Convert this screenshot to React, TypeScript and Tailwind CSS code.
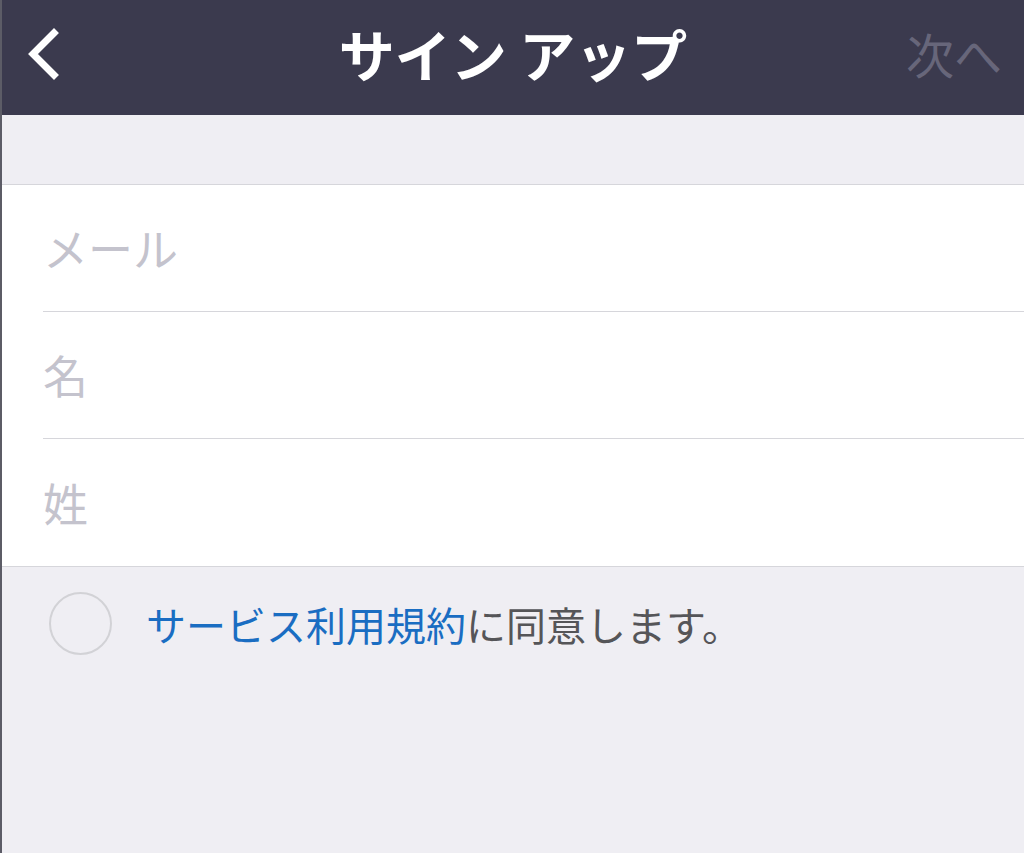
import { useState } from "react";

const FONT = { fontFamily: '"Noto Sans CJK JP", "Noto Sans", sans-serif' };

function BackChevron() {
  return (
    <svg width="40" height="56" viewBox="0 0 40 56" fill="none" aria-hidden>
      <path
        d="M30 6 L9 27 L30 48"
        stroke="white"
        strokeWidth="7"
        strokeLinecap="square"
        strokeLinejoin="miter"
      />
    </svg>
  );
}

function Field({ placeholder, last }: { placeholder: string; last?: boolean }) {
  return (
    <div className="pl-[41px]">
      <div
        className={`flex h-[127px] items-center ${last ? "" : "border-b border-[#d6d6db]"}`}
      >
        <input
          placeholder={placeholder}
          className="w-full bg-transparent text-[45px] text-[#333] outline-none placeholder:text-[#c4c3cd]"
          style={FONT}
        />
      </div>
    </div>
  );
}

export default function App() {
  const [agreed, setAgreed] = useState(false);

  return (
    <div
      className="flex min-h-[853px] flex-col border-l-2 border-[#5c5c66] bg-[#efeef3]"
      style={FONT}
    >
      <header className="flex h-[115px] items-center justify-between bg-[#3b3a4e] pb-[10px] pl-[22px] pr-[22px]">
        <button type="button" className="flex w-[120px] items-center pt-[4px]">
          <BackChevron />
        </button>
        <h1 className="text-[56px] leading-none font-bold text-white">サイン アップ</h1>
        <button
          type="button"
          className="w-[120px] text-right text-[48px] leading-none text-[#67667a]"
        >
          次へ
        </button>
      </header>

      <div className="h-[70px] border-b border-[#d6d6db]" />

      <div className="border-b border-[#d6d6db] bg-white">
        <Field placeholder="メール" />
        <Field placeholder="名" />
        <Field placeholder="姓" last />
      </div>

      <div className="flex items-center gap-[34px] pl-[47px] pt-[25px]">
        <button
          type="button"
          onClick={() => setAgreed(!agreed)}
          className={`h-[63px] w-[63px] shrink-0 rounded-full border-2 ${agreed ? "border-[#1a6dc2] bg-[#1a6dc2]" : "border-[#d2d2d6]"}`}
        />
        <p className="text-[40px] text-[#555558]">
          <span className="text-[#1a6dc2]">サービス利用規約</span>
          に同意します。
        </p>
      </div>
    </div>
  );
}
